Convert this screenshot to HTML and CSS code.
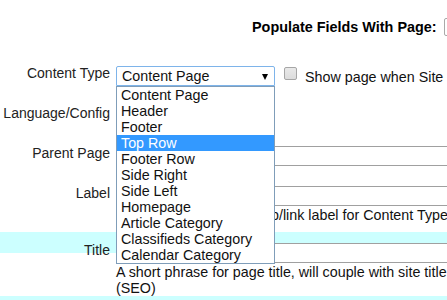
FILE: index.html
```html
<!DOCTYPE html>
<html lang="en">
<head>
  <meta charset="UTF-8">
  <title>Edit Page</title>
  <link rel="stylesheet" href="styles.css">
</head>
<body>
  <div class="populate">
    <span class="populate-label">Populate Fields With Page:</span>
    <span class="mini-select"></span>
  </div>

  <div class="form">
    <div class="row row-type">
      <div class="label">Content Type</div>
      <div class="field inline">
        <div class="select select-open">
          <span>Content Page</span>
          <span class="arrow"></span>
        </div>
        <span class="checkbox"></span>
        <span class="check-text">Show page when Site is offline</span>
      </div>
    </div>

    <div class="row">
      <div class="label">Language/Config</div>
      <div class="field">
        <div class="select small"></div>
      </div>
    </div>

    <div class="row">
      <div class="label">Parent Page</div>
      <div class="field">
        <div class="text-input"></div>
      </div>
    </div>

    <div class="row row-desc">
      <div class="label">Label</div>
      <div class="field">
        <div class="text-input"></div>
        <div class="desc nowrap">Label shown as menu tab/link label for Content Type</div>
      </div>
    </div>

    <div class="row row-alt">
      <div class="label">Title</div>
      <div class="field">
        <div class="text-input"></div>
        <div class="desc">A short phrase for page title, will couple with site title (SEO)</div>
      </div>
    </div>

    <div class="row row-alt">
      <div class="label"></div>
      <div class="field">
        <div class="text-input"></div>
      </div>
    </div>
  </div>

  <ul class="dropdown">
    <li>Content Page</li>
    <li>Header</li>
    <li>Footer</li>
    <li class="active">Top Row</li>
    <li>Footer Row</li>
    <li>Side Right</li>
    <li>Side Left</li>
    <li>Homepage</li>
    <li>Article Category</li>
    <li>Classifieds Category</li>
    <li>Calendar Category</li>
  </ul>
</body>
</html>
```

FILE: styles.css
```css
body {
  margin: 0;
  width: 447px;
  height: 300px;
  overflow: hidden;
  position: relative;
  background: #fff;
  color: #111;
  font-family: "Liberation Sans", Arial, sans-serif;
  font-size: 14.3px;
}
.populate {
  display: flex;
  align-items: center;
  gap: 7px;
  padding: 18px 0 0 252px;
  height: 18px;
  white-space: nowrap;
}
.populate-label {
  font-weight: bold;
  font-size: 14.4px;
  color: #000;
}
.mini-select {
  flex: none;
  width: 60px;
  height: 16px;
  border: 1px solid #a9a9a9;
  border-radius: 2px;
}
.form {
  padding-top: 30px;
}
.row {
  display: flex;
  align-items: flex-start;
  height: 40px;
}
.row-desc {
  height: 46px;
}
.row-alt {
  height: auto;
  padding-top: 11px;
  background: linear-gradient(#ccffff 21px, transparent 21px);
}
.label {
  flex: none;
  width: 110px;
  min-height: 16px;
  padding-right: 6px;
  margin-top: -1px;
  text-align: right;
  font-size: 14px;
  line-height: 16px;
  color: #222;
}
.field {
  flex: none;
  width: 350px;
}
.inline {
  display: flex;
  align-items: flex-start;
  white-space: nowrap;
}
.select {
  flex: none;
  box-sizing: border-box;
  width: 159px;
  height: 20px;
  border: 1px solid #a9a9a9;
  display: flex;
  align-items: center;
  justify-content: space-between;
  padding: 0 5px;
  line-height: 18px;
}
.select-open {
  border-color: #7eb4ea;
  border-radius: 2px 2px 0 0;
}
.select.small {
  width: 140px;
}
.arrow {
  width: 0;
  height: 0;
  border-left: 3.5px solid transparent;
  border-right: 3.5px solid transparent;
  border-top: 6px solid #000;
  margin: 1px 1px 0 0;
}
.checkbox {
  flex: none;
  box-sizing: border-box;
  width: 13px;
  height: 13px;
  margin: 1px 8px 0 9px;
  border: 1px solid #a6a6a6;
  border-radius: 2px;
  background: linear-gradient(#e9e9e9, #dcdcdc);
}
.check-text {
  line-height: 18px;
  padding-top: 2px;
}
.text-input {
  box-sizing: border-box;
  width: 340px;
  height: 20px;
  border: 1px solid #a0a0a0;
  background: #fff;
}
.desc {
  margin-top: 1px;
  line-height: 16px;
}
.nowrap {
  white-space: nowrap;
}
.dropdown {
  position: absolute;
  left: 116px;
  top: 86px;
  width: 157px;
  margin: 0;
  padding: 0;
  list-style: none;
  background: #fff;
  border: 1px solid #7f9db9;
}
.dropdown li {
  height: 16px;
  line-height: 16px;
  padding-left: 4px;
  white-space: nowrap;
}
.dropdown li.active {
  background: #3399ff;
  color: #fff;
}
```
